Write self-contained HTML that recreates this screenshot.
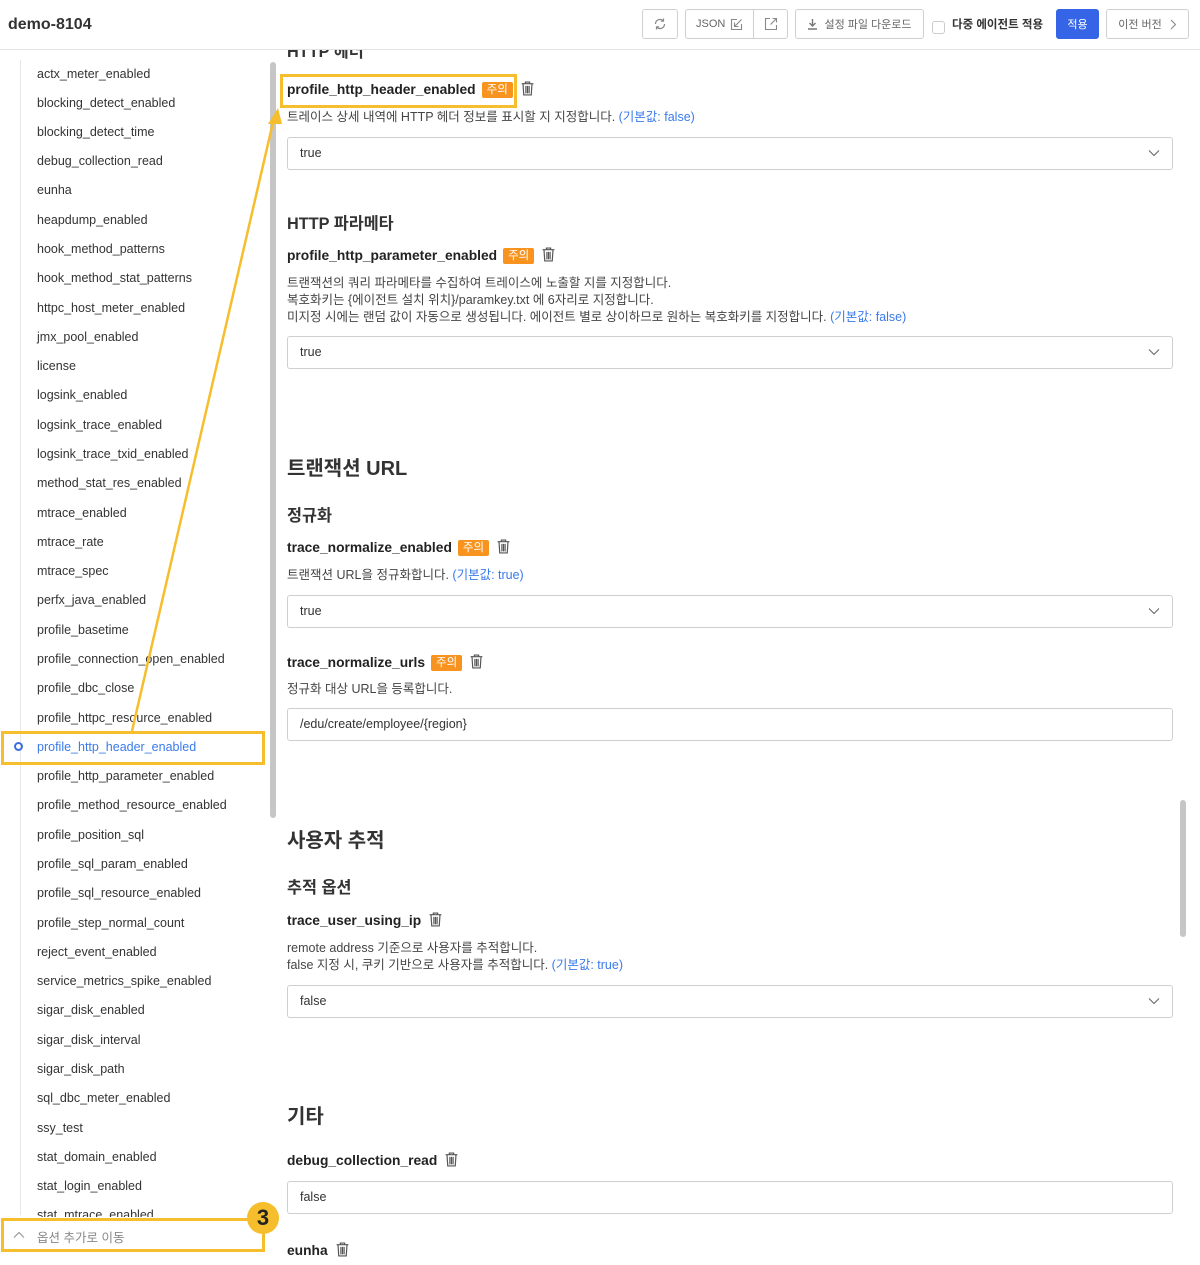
<!DOCTYPE html>
<html><head><meta charset="utf-8">
<style>
*{margin:0;padding:0;box-sizing:border-box}
body{width:1200px;height:1265px;overflow:hidden;background:#fff;font-family:"Liberation Sans","Noto Sans CJK KR",sans-serif;color:#333;position:relative}
.a{position:absolute;white-space:nowrap}
.hdr{position:absolute;left:0;top:0;width:1200px;height:50px;background:#fff;border-bottom:1px solid #e2e2e2;z-index:5}
.btn{position:absolute;top:9px;height:30px;border:1px solid #cfcfcf;border-radius:3px;background:#fff;font-size:11px;color:#666;display:flex;align-items:center;justify-content:center}
.side{position:absolute;left:20px;top:60px;width:1px;height:1155px;background:#e8e8e8}
.li{position:absolute;left:37px;font-size:12.5px;color:#333;line-height:16px}
.t{font-size:13.8px;font-weight:bold;color:#222;line-height:20px}
.bd{display:inline-block;background:#f7931e;color:#fff;font-size:11.5px;font-weight:normal;padding:0 5px;line-height:16px;border-radius:2px;margin-left:6px;vertical-align:1px}
.tr{display:inline-block;width:15px;height:15px;margin-left:7px;vertical-align:-2px}
.d{font-size:12.5px;color:#444;line-height:17px}
.d b{font-weight:normal;color:#3a7bea}
.sel{position:absolute;left:287px;width:886px;height:33px;border:1px solid #cfcfcf;border-radius:3px;font-size:12.5px;color:#333;padding-left:12px;line-height:31px}
.sel svg{position:absolute;right:12px;top:11px}
.h3{font-size:16.3px;font-weight:bold;color:#333;line-height:20px}
.h2{font-size:20px;font-weight:bold;color:#333;line-height:26px}
</style></head><body>
<svg width="0" height="0" style="position:absolute"><defs><symbol id="trash" viewBox="0 0 14 14"><path d="M1.5 2.5h11M5 2.5V1h4v1.5M2.8 2.5l.7 10.5h7l.7-10.5M5.5 4.5v7M7 4.5v7M8.5 4.5v7" fill="none" stroke="#555" stroke-width="1.1"/></symbol><symbol id="chev" viewBox="0 0 12 8"><path d="M1 1.5l5 5 5-5" fill="none" stroke="#666" stroke-width="1.1"/></symbol></defs></svg>

<div class="hdr">
<div class="a" style="left:8px;top:16px;font-size:16px;font-weight:bold;color:#333">demo-8104</div>
<div class="btn" style="left:642px;width:36px"><svg width="14" height="14" viewBox="0 0 14 14"><path d="M2.5 7a4.5 4.5 0 0 1 7.7-3.2M11.5 7a4.5 4.5 0 0 1-7.7 3.2" fill="none" stroke="#888" stroke-width="1.2"/><path d="M10.5 1.5v2.7H7.8M3.5 12.5V9.8h2.7" fill="none" stroke="#888" stroke-width="1.2"/></svg></div>
<div class="btn" style="left:685px;width:103px;justify-content:flex-start"><span style="padding-left:10px">JSON</span><svg style="margin-left:5px" width="13" height="13" viewBox="0 0 13 13"><path d="M7 1.5H1.5v10h10V6M11.5 1.5L5 8M4.5 4.5V8.5h4" fill="none" stroke="#888" stroke-width="1.1"/></svg><span style="position:absolute;left:67px;top:0;width:1px;height:28px;background:#cfcfcf"></span><svg style="position:absolute;left:78px;top:7px" width="14" height="14" viewBox="0 0 14 14"><path d="M6 1.5H1.5v11h11V8M8.5 1.5h4v4M12.5 1.5L6.5 7.5" fill="none" stroke="#888" stroke-width="1.1"/></svg></div>
<div class="btn" style="left:795px;width:129px"><svg width="11" height="12" viewBox="0 0 11 12" style="margin-right:6px"><path d="M5.5 1v7M2.5 5l3 3 3-3M1 11h9" fill="none" stroke="#777" stroke-width="1.4"/></svg>설정 파일 다운로드</div>
<div class="a" style="left:932px;top:21px;width:13px;height:13px;border:1px solid #ccc;border-radius:3px"></div>
<div class="a" style="left:952px;top:16px;font-size:11.5px;font-weight:bold;color:#333">다중 에이전트 적용</div>
<div class="btn" style="left:1056px;width:43px;background:#3565e6;border-color:#3565e6;color:#fff">적용</div>
<div class="btn" style="left:1106px;width:83px">이전 버전<svg style="margin-left:8px" width="7" height="11" viewBox="0 0 7 11"><path d="M1 1l4.5 4.5L1 10" fill="none" stroke="#888" stroke-width="1.1"/></svg></div>
</div>

<div class="side"></div>
<div class="a" style="left:270px;top:62px;width:6px;height:756px;background:#c6c6c6;border-radius:3px"></div>
<div class="a" style="left:1180px;top:800px;width:6px;height:137px;background:#c6c6c6;border-radius:3px"></div>

<div class="li" style="top:66px">actx_meter_enabled</div>
<div class="li" style="top:95px">blocking_detect_enabled</div>
<div class="li" style="top:124px">blocking_detect_time</div>
<div class="li" style="top:153px">debug_collection_read</div>
<div class="li" style="top:182px">eunha</div>
<div class="li" style="top:212px">heapdump_enabled</div>
<div class="li" style="top:241px">hook_method_patterns</div>
<div class="li" style="top:270px">hook_method_stat_patterns</div>
<div class="li" style="top:300px">httpc_host_meter_enabled</div>
<div class="li" style="top:329px">jmx_pool_enabled</div>
<div class="li" style="top:358px">license</div>
<div class="li" style="top:387px">logsink_enabled</div>
<div class="li" style="top:417px">logsink_trace_enabled</div>
<div class="li" style="top:446px">logsink_trace_txid_enabled</div>
<div class="li" style="top:475px">method_stat_res_enabled</div>
<div class="li" style="top:505px">mtrace_enabled</div>
<div class="li" style="top:534px">mtrace_rate</div>
<div class="li" style="top:563px">mtrace_spec</div>
<div class="li" style="top:592px">perfx_java_enabled</div>
<div class="li" style="top:622px">profile_basetime</div>
<div class="li" style="top:651px">profile_connection_open_enabled</div>
<div class="li" style="top:680px">profile_dbc_close</div>
<div class="li" style="top:710px">profile_httpc_resource_enabled</div>
<div class="li" style="top:739px;color:#3a7bea">profile_http_header_enabled</div>
<div class="a" style="left:14px;top:742px;width:9px;height:9px;border:2px solid #3a6ee0;border-radius:50%"></div>
<div class="li" style="top:768px">profile_http_parameter_enabled</div>
<div class="li" style="top:797px">profile_method_resource_enabled</div>
<div class="li" style="top:827px">profile_position_sql</div>
<div class="li" style="top:856px">profile_sql_param_enabled</div>
<div class="li" style="top:885px">profile_sql_resource_enabled</div>
<div class="li" style="top:915px">profile_step_normal_count</div>
<div class="li" style="top:944px">reject_event_enabled</div>
<div class="li" style="top:973px">service_metrics_spike_enabled</div>
<div class="li" style="top:1002px">sigar_disk_enabled</div>
<div class="li" style="top:1032px">sigar_disk_interval</div>
<div class="li" style="top:1061px">sigar_disk_path</div>
<div class="li" style="top:1090px">sql_dbc_meter_enabled</div>
<div class="li" style="top:1120px">ssy_test</div>
<div class="li" style="top:1149px">stat_domain_enabled</div>
<div class="li" style="top:1178px">stat_login_enabled</div>
<div class="li" style="top:1207px;height:10px;overflow:hidden">stat_mtrace_enabled</div>
<div class="a" style="left:0;top:1218px;width:265px;height:47px;background:#fff"></div>
<svg class="a" style="left:13px;top:1231px" width="12" height="8" viewBox="0 0 12 8"><path d="M1 6.5l5-5 5 5" fill="none" stroke="#999" stroke-width="1.2"/></svg>
<div class="a" style="left:37px;top:1227px;font-size:12.5px;color:#888">옵션 추가로 이동</div>

<!-- main -->
<div class="a h3" style="left:287px;top:42px">HTTP 헤더</div>
<div class="a t" style="left:287px;top:80px">profile_http_header_enabled<span class="bd">주의</span><svg class="tr"><use href="#trash"/></svg></div>
<div class="a d" style="left:287px;top:109px">트레이스 상세 내역에 HTTP 헤더 정보를 표시할 지 지정합니다. <b>(기본값: false)</b></div>
<div class="sel" style="top:137px">true<svg width="12" height="8"><use href="#chev"/></svg></div>

<div class="a h3" style="left:287px;top:214px">HTTP 파라메타</div>
<div class="a t" style="left:287px;top:246px">profile_http_parameter_enabled<span class="bd">주의</span><svg class="tr"><use href="#trash"/></svg></div>
<div class="a d" style="left:287px;top:275px">트랜잭션의 쿼리 파라메타를 수집하여 트레이스에 노출할 지를 지정합니다.<br>복호화키는 {에이전트 설치 위치}/paramkey.txt 에 6자리로 지정합니다.<br>미지정 시에는 랜덤 값이 자동으로 생성됩니다. 에이전트 별로 상이하므로 원하는 복호화키를 지정합니다. <b>(기본값: false)</b></div>
<div class="sel" style="top:336px">true<svg width="12" height="8"><use href="#chev"/></svg></div>

<div class="a h2" style="left:287px;top:456px">트랜잭션 URL</div>
<div class="a h3" style="left:287px;top:506px">정규화</div>
<div class="a t" style="left:287px;top:538px">trace_normalize_enabled<span class="bd">주의</span><svg class="tr"><use href="#trash"/></svg></div>
<div class="a d" style="left:287px;top:567px">트랜잭션 URL을 정규화합니다. <b>(기본값: true)</b></div>
<div class="sel" style="top:595px">true<svg width="12" height="8"><use href="#chev"/></svg></div>
<div class="a t" style="left:287px;top:653px">trace_normalize_urls<span class="bd">주의</span><svg class="tr"><use href="#trash"/></svg></div>
<div class="a d" style="left:287px;top:681px">정규화 대상 URL을 등록합니다.</div>
<div class="sel" style="top:708px">/edu/create/employee/{region}</div>

<div class="a h2" style="left:287px;top:828px">사용자 추적</div>
<div class="a h3" style="left:287px;top:878px">추적 옵션</div>
<div class="a t" style="left:287px;top:911px">trace_user_using_ip<svg class="tr"><use href="#trash"/></svg></div>
<div class="a d" style="left:287px;top:940px">remote address 기준으로 사용자를 추적합니다.<br>false 지정 시, 쿠키 기반으로 사용자를 추적합니다. <b>(기본값: true)</b></div>
<div class="sel" style="top:985px">false<svg width="12" height="8"><use href="#chev"/></svg></div>

<div class="a h2" style="left:287px;top:1104px">기타</div>
<div class="a t" style="left:287px;top:1151px">debug_collection_read<svg class="tr"><use href="#trash"/></svg></div>
<div class="sel" style="top:1181px">false</div>
<div class="a t" style="left:287px;top:1241px">eunha<svg class="tr"><use href="#trash"/></svg></div>

<!-- annotations -->
<div class="a" style="left:280px;top:74px;width:237px;height:34px;border:3px solid #f6be2c"></div>
<div class="a" style="left:1px;top:731px;width:264px;height:34px;border:3px solid #f6be2c"></div>
<div class="a" style="left:1px;top:1218px;width:264px;height:34px;border:3px solid #f6be2c"></div>
<svg class="a" style="left:0;top:0;z-index:6" width="300" height="800"><path d="M132 731L274 118" stroke="#f6be2c" stroke-width="2.5" fill="none"/><path d="M278 108L268 124L282 124Z" fill="#f6be2c"/></svg>
<div class="a" style="left:247px;top:1202px;width:32px;height:32px;border-radius:50%;background:#f6be2c;font-size:22px;font-weight:bold;color:#222;text-align:center;line-height:32px">3</div>
</body></html>
